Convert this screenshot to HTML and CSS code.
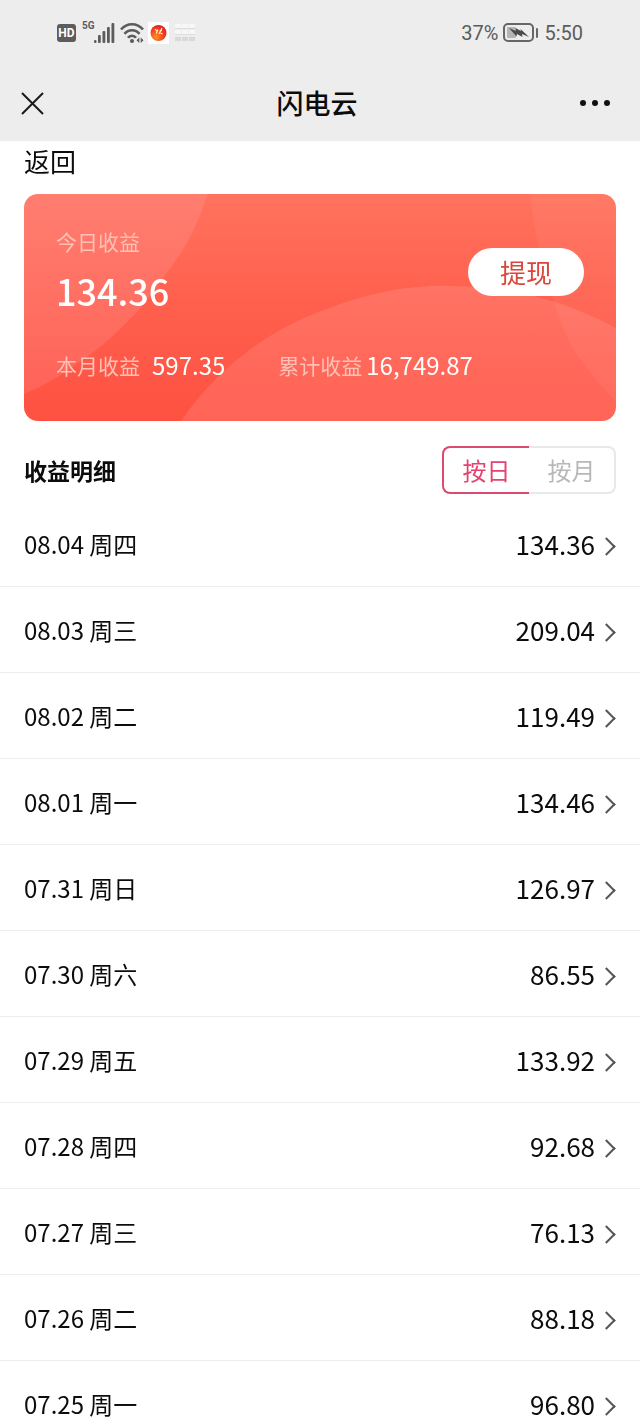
FILE: index.html
```
<!DOCTYPE html>
<html lang="zh-CN">
<head>
    <meta charset="UTF-8">
    <meta name="viewport" content="width=device-width, initial-scale=1.0">
    <title>闪电云</title>
    <link rel="stylesheet" href="styles.css">
</head>
<body>
    <!-- 状态栏 -->
    <div class="status-bar">
        <div class="status-left">
            <span class="hd">HD</span>
            <span class="network">5G</span>
            <svg class="signal" width="21" height="20" viewBox="0 0 21 20" fill="#5c5c5c">
                <rect x="0" y="17" width="2.500" height="3" rx="1"/>
                <rect x="4" y="12" width="2.800" height="8" rx="1"/>
                <rect x="8.500" y="8" width="2.800" height="12" rx="1"/>
                <rect x="13" y="4" width="2.800" height="16" rx="1"/>
                <rect x="17.500" y="0" width="2.800" height="20" rx="1"/>
            </svg>
            <svg class="wifi" width="24" height="22" viewBox="0 0 24 22" fill="none" stroke="#5c5c5c" stroke-width="2.6">
                <path d="M1 7.500C7 .5 17 .5 23 7.500"/>
                <path d="M4.500 11.800C8.500 7 15.500 7 19.500 11.800"/>
                <path d="M8 15.800C10 13 14 13 16 15.800"/>
                <circle cx="12" cy="19" r="2.100" fill="#5c5c5c" stroke="none"/>
                <path d="M19.300 15.500V21L16.500 18.200ZM20.700 15.500V21L23.500 18.200Z" fill="#5c5c5c" stroke="none"/>
            </svg>
            <svg class="app" width="21" height="22" viewBox="0 0 21 22">
                <defs>
                    <radialGradient id="ball" cx=".35" cy=".75" r=".75">
                        <stop offset="0" stop-color="#ff921c"/>
                        <stop offset=".6" stop-color="#f5431c"/>
                        <stop offset="1" stop-color="#e0261c"/>
                    </radialGradient>
                </defs>
                <rect width="21" height="22" fill="#fff"/>
                <circle cx="10.500" cy="11" r="8" fill="url(#ball)"/>
                <path d="M7 7l2 2.500 1-2M9 9.500l-.5 2M14 6l-3 6M11.500 9l2.500-.5M12.500 11l2 1" fill="none" stroke="#fff3d8" stroke-width="1.200"/>
            </svg>
            <svg class="grid-icon" width="21" height="18" viewBox="0 0 21 18">
                <path d="M0 0h6v5H0zM7 0h6v5H7zM14 0h6v5h-6zM0 6h6v5H0zM7 6h6v5H7zM14 6h6v5h-6z" fill="#f7f7f7"/>
                <path d="M0 4h6v1H0zM7 4h6v1H7zM14 4h6v1h-6zM0 10h6v1H0zM7 10h6v1H7zM14 10h6v1h-6z" fill="#dcdcdc"/>
                <path d="M0 13h6v4H0zM7 13h6v4H7zM14 13h6v4h-6z" fill="#d9d9d9"/>
            </svg>
        </div>
        <div class="status-right">
            <span>37%</span>
            <svg width="36" height="20" viewBox="0 0 36 20">
                <rect x="1" y="1" width="29" height="17" rx="4" fill="none" stroke="#666" stroke-width="2"/>
                <rect x="4" y="4" width="9" height="11" rx="1" fill="#b5b5b5"/>
                <path d="M6 5L13 8L12.500 5L18 8L17.500 6L26 14L19 11L19.500 14L14 11L13.500 13.500Z" fill="#4b4b4b"/>
                <rect x="33" y="5" width="2" height="10" rx="1" fill="#666"/>
            </svg>
            <span>5:50</span>
        </div>
    </div>

    <!-- 标题栏 -->
    <header class="nav">
        <button class="nav-btn" type="button" aria-label="关闭">
            <svg width="24" height="24" viewBox="0 0 24 24" stroke="#1a1a1a" stroke-width="2">
                <path d="M2 2l21 21M23 2L2 23"/>
            </svg>
        </button>
        <h1>闪电云</h1>
        <button class="nav-btn nav-more" type="button" aria-label="更多">
            <svg width="30" height="6" viewBox="0 0 30 6" fill="#111">
                <circle cx="3" cy="3" r="3"/>
                <circle cx="15" cy="3" r="3"/>
                <circle cx="27" cy="3" r="3"/>
            </svg>
        </button>
    </header>

    <main class="content">
        <a class="back" href="#">返回</a>

        <!-- 收益卡片 -->
        <section class="card">
            <svg class="card-bg" viewBox="0 0 592 227" preserveAspectRatio="none">
                <defs>
                    <linearGradient id="base" x1="0" y1="0" x2="0" y2="1">
                        <stop offset="0" stop-color="#ff735e"/>
                        <stop offset=".5" stop-color="#ff5f4d"/>
                        <stop offset="1" stop-color="#fe5142"/>
                    </linearGradient>
                    <linearGradient id="left" x1="0" y1="0" x2="0" y2="1">
                        <stop offset="0" stop-color="#ff7e70"/>
                        <stop offset="1" stop-color="#ff6358"/>
                    </linearGradient>
                    <linearGradient id="circle" x1="0" y1="0" x2="0" y2="1">
                        <stop offset="0" stop-color="#ff7464"/>
                        <stop offset=".6" stop-color="#ff685a"/>
                        <stop offset="1" stop-color="#ff6457"/>
                    </linearGradient>
                </defs>
                <rect width="592" height="227" fill="url(#base)"/>
                <path d="M0 0H184C168 45 156 62 141 81Q124 108 103 128Q82 150 61 164Q32 187 0 200Z" fill="url(#left)"/>
                <path d="M157 227Q184 188 219 161Q258 130 306 114Q368 90 429 92Q514 92 592 134V227Z" fill="url(#circle)"/>
                <path d="M506 0H592V208Q565 180 549 154Q539 136 531 111Q512 55 506 0Z" fill="#fff" fill-opacity=".05"/>
            </svg>
            <div class="card-top">
                <div>
                    <div class="label">今日收益</div>
                    <div class="today">134.36</div>
                </div>
                <button class="withdraw" type="button">提现</button>
            </div>
            <div class="card-bottom">
                <div class="stat stat-month"><span class="label">本月收益</span><span>597.35</span></div>
                <div class="stat"><span class="label">累计收益</span><span>16,749.87</span></div>
            </div>
        </section>

        <div class="detail-head">
            <h2>收益明细</h2>
            <div class="tabs">
                <button class="tab active" type="button">按日</button>
                <button class="tab" type="button">按月</button>
            </div>
        </div>

        <!-- 每日收益 -->
        <ul class="list">
            <li><a href="#"><span>08.04 周四</span><span class="amount">134.36</span></a></li>
            <li><a href="#"><span>08.03 周三</span><span class="amount">209.04</span></a></li>
            <li><a href="#"><span>08.02 周二</span><span class="amount">119.49</span></a></li>
            <li><a href="#"><span>08.01 周一</span><span class="amount">134.46</span></a></li>
            <li><a href="#"><span>07.31 周日</span><span class="amount">126.97</span></a></li>
            <li><a href="#"><span>07.30 周六</span><span class="amount">86.55</span></a></li>
            <li><a href="#"><span>07.29 周五</span><span class="amount">133.92</span></a></li>
            <li><a href="#"><span>07.28 周四</span><span class="amount">92.68</span></a></li>
            <li><a href="#"><span>07.27 周三</span><span class="amount">76.13</span></a></li>
            <li><a href="#"><span>07.26 周二</span><span class="amount">88.18</span></a></li>
            <li><a href="#"><span>07.25 周一</span><span class="amount">96.80</span></a></li>
        </ul>
    </main>
</body>
</html>
```

FILE: styles.css
```
* { box-sizing: border-box; }
body { margin: 0; height: 100vh; display: flex; flex-direction: column; overflow: hidden; background: #fff; color: #0c0c0c; font-family: "Noto Sans CJK SC", sans-serif; font-size: 24px; }
button { margin: 0; padding: 0; border: none; background: none; font-family: inherit; cursor: pointer; }
a { color: inherit; text-decoration: none; }
svg { display: block; }

/* 状态栏 */
.status-bar { flex: none; display: flex; justify-content: space-between; height: 66px; padding: 0 57px; background: #ededed; color: #5c5c5c; font-family: Roboto, sans-serif; font-size: 20px; }
.status-left, .status-right { display: flex; align-items: center; }
.status-right { gap: 5px; }
.hd { width: 19px; height: 18px; border-radius: 3px; background: #5c5c5c; color: #fff; font-size: 12px; font-weight: 700; line-height: 18px; text-align: center; }
.network { align-self: flex-start; width: 12px; margin: 20px 0 0 6px; font-size: 10px; font-weight: 700; line-height: 12px; }
.wifi { margin-left: 5px; }
.app { margin-left: 4px; }
.grid-icon { margin-left: 6px; }

/* 标题栏 */
.nav { flex: none; display: flex; justify-content: space-between; align-items: center; height: 75px; padding: 0 30px 2px 20px; background: #ededed; }
.nav h1 { margin: 0; font-size: 27px; font-weight: 500; line-height: 40px; }
.nav-btn { display: flex; justify-content: flex-start; width: 36px; }
.nav-more { justify-content: flex-end; width: 32px; }

.content { flex: 1; min-height: 0; overflow-y: auto; scrollbar-width: none; }
.back { display: block; padding: 0 24px; font-size: 26px; line-height: 40px; }

/* 收益卡片 */
.card { position: relative; margin: 13px 24px 0; padding: 31px 32px 36px; border-radius: 14px; overflow: hidden; color: #fff; }
.card-bg { position: absolute; inset: 0; z-index: -1; width: 100%; height: 100%; }
.card-top { display: flex; justify-content: space-between; align-items: center; }
.label { color: #ffc0b5; font-size: 21px; line-height: 32px; }
.today { font-size: 36px; font-weight: 500; line-height: 66px; }
.withdraw { width: 116px; height: 48px; margin-bottom: 4px; border-radius: 24px; background: #fff; color: #d9463c; font-size: 26px; line-height: 48px; }
.card-bottom { display: flex; gap: 53px; margin-top: 22px; }
.stat { display: flex; align-items: center; gap: 4px; line-height: 40px; }
.stat-month { gap: 12px; }

.detail-head { display: flex; justify-content: space-between; align-items: center; padding: 25px 24px 7px; }
.detail-head h2 { margin: 0; font-size: 23px; font-weight: 700; line-height: 40px; }
.tabs { display: flex; }
.tab { width: 87px; height: 48px; border: 2px solid #e8e8e8; border-left: none; border-radius: 0 8px 8px 0; color: #b8b8b8; font-size: 24px; line-height: 44px; }
.tab.active { border: 2px solid #dc4a72; border-right: none; border-radius: 8px 0 0 8px; color: #e34370; }

/* 每日收益列表 */
.list { margin: 0; padding: 0; list-style: none; }
.list a { display: flex; justify-content: space-between; align-items: center; height: 86px; padding: 0 24px; border-bottom: 1px solid #ededed; }
.amount { display: flex; align-items: center; font-size: 26px; }
.amount::after { content: ""; width: 11px; height: 11px; margin: 6px 3px 0 5px; border-top: 2px solid #555; border-right: 2px solid #555; transform: rotate(45deg); }
```
